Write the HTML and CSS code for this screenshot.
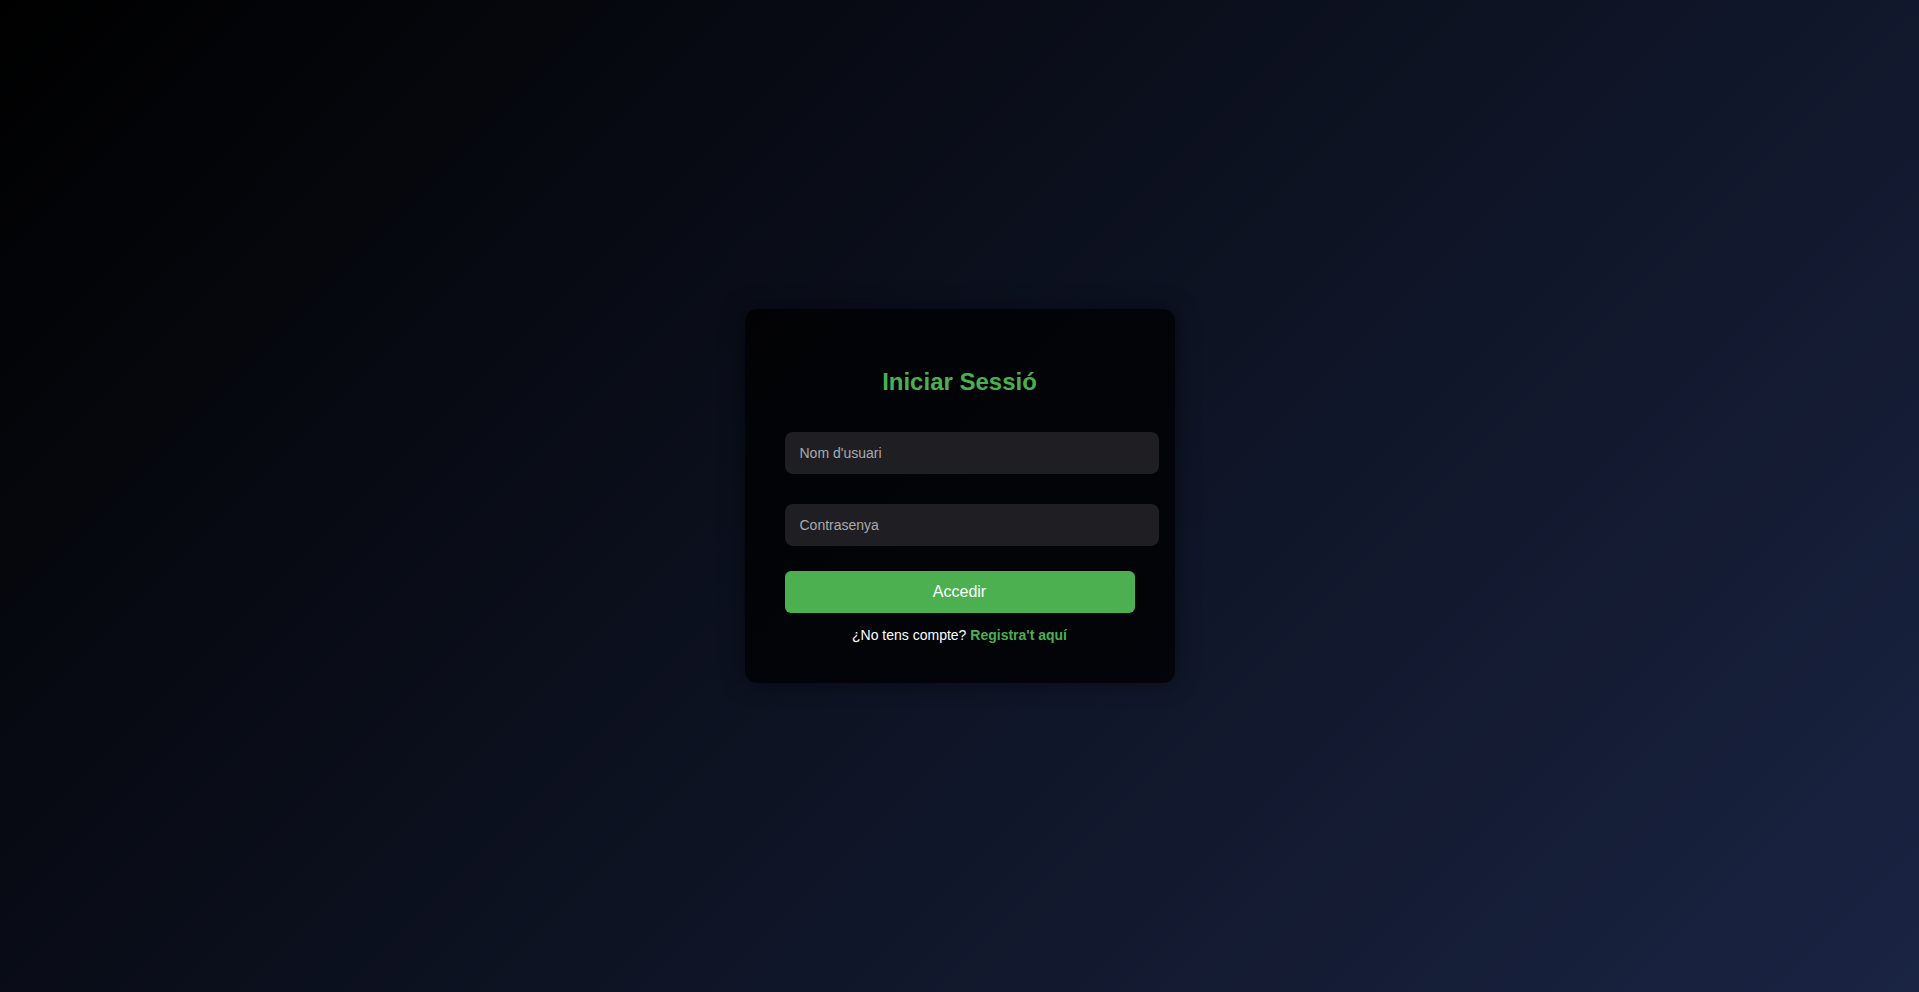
FILE: index.html
```html
<!DOCTYPE html>
<html lang="ca">
<head>
<meta charset="utf-8">
<title>Iniciar Sessió</title>
<link rel="stylesheet" href="styles.css">
</head>
<body>
  <main class="page">
    <div class="card">
      <h2 class="title">Iniciar Sessió</h2>
      <form class="form">
        <input class="field field-user" type="text" placeholder="Nom d'usuari">
        <input class="field field-pass" type="password" placeholder="Contrasenya">
        <button class="submit" type="button">Accedir</button>
      </form>
      <p class="register">¿No tens compte? <a class="register-link" href="#">Registra't aquí</a></p>
    </div>
  </main>
</body>
</html>
```

FILE: styles.css
```css
html, body {
  margin: 0;
  padding: 0;
}

body {
  font-family: "Liberation Sans", Arial, sans-serif;
  background: linear-gradient(135deg, #000000 0%, #1a2443 100%);
  min-height: 100vh;
}

.page {
  min-height: 100vh;
  display: flex;
  align-items: center;
  justify-content: center;
}

.card {
  width: 350px;
  padding: 40px;
  background: rgba(0, 0, 0, 0.78);
  border-radius: 12px;
  box-shadow: 0 0 24px rgba(0, 0, 0, 0.45);
}

.title {
  margin: 19px 0 36px;
  font-size: 24px;
  line-height: 28px;
  font-weight: bold;
  text-align: center;
  color: #4caf50;
}

.form {
  display: flex;
  flex-direction: column;
  align-items: flex-start;
  margin: 0;
}

.field {
  box-sizing: border-box;
  width: calc(100% + 24px);
  height: 42px;
  padding: 0 15px;
  border: none;
  border-radius: 8px;
  background: #1f1f23;
  color: #e0e0e0;
  font-family: "Liberation Sans", Arial, sans-serif;
  font-size: 14px;
  outline: none;
}

.field::placeholder {
  color: #a9a9ad;
}

.field-user {
  margin-bottom: 30px;
}

.field-pass {
  margin-bottom: 25px;
}

.submit {
  width: 100%;
  height: 42px;
  border: none;
  border-radius: 6px;
  background: #4caf50;
  color: #ffffff;
  font-family: "Liberation Sans", Arial, sans-serif;
  font-size: 16px;
  cursor: pointer;
}

.register {
  margin: 14px 0 0;
  font-size: 14px;
  line-height: 16px;
  text-align: center;
  color: #ffffff;
}

.register-link {
  color: #4caf50;
  font-weight: bold;
  text-decoration: none;
}
```
